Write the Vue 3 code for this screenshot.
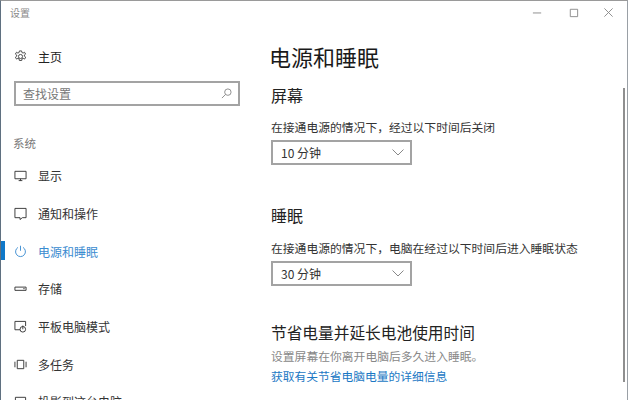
<script setup>
const items = [
  { label: '显示', icon: 'display' },
  { label: '通知和操作', icon: 'notify' },
  { label: '电源和睡眠', icon: 'power', active: true },
  { label: '存储', icon: 'storage' },
  { label: '平板电脑模式', icon: 'tablet' },
  { label: '多任务', icon: 'multi' },
  { label: '投影到这台电脑', icon: 'project' },
]
</script>

<template>
  <div class="window">
    <aside class="side">
      <div class="app-title">设置</div>
      <div class="home">
        <svg class="icon" viewBox="0 0 14 14" fill="none" stroke="#444" stroke-width="1">
          <circle cx="7" cy="7" r="2.2" />
          <path d="M5.8 1h2.4l.3 1.7 1.3.6 1.5-.9 1.2 2-1.4 1 .1 1.3 1.4 1-1.2 2.1-1.5-.8-1.3.6-.3 1.7H5.8l-.3-1.7-1.3-.6-1.5.8-1.2-2.1 1.4-1V5.4L1.5 4.4l1.2-2 1.5.9 1.3-.6z" />
        </svg>
        <span>主页</span>
      </div>
      <div class="search">
        <span>查找设置</span>
        <svg class="search-icon" viewBox="0 0 12 12" fill="none" stroke="#888" stroke-width="1">
          <circle cx="7.5" cy="4.5" r="3.5" />
          <path d="M5 7L1 11" />
        </svg>
      </div>
      <div class="group">系统</div>
      <nav class="nav">
        <div v-for="item in items" :key="item.label" class="row" :class="{ active: item.active }">
          <svg class="icon" viewBox="0 0 14 14" fill="none" stroke="currentColor" stroke-width="1">
            <template v-if="item.icon === 'display'">
              <path d="M1 2.5h12v8H1z" /><path d="M5 12.5h4M7 10.5v2" />
            </template>
            <template v-else-if="item.icon === 'notify'">
              <path d="M1 1.5h12v10H9L6.5 13.5v-2H1z" />
            </template>
            <template v-else-if="item.icon === 'power'">
              <path d="M4.3 2.6a5.3 5.3 0 1 0 5.4 0" /><path d="M7 .8v5.4" />
            </template>
            <template v-else-if="item.icon === 'storage'">
              <path d="M1 5.5h12v3.5H1z" /><path d="M10 7.2h1.5" />
            </template>
            <template v-else-if="item.icon === 'tablet'">
              <path d="M6.5 10.5H1V1.5h11.5v5" /><circle cx="9.5" cy="10" r="3" /><path d="M9.5 6v4" />
            </template>
            <template v-else-if="item.icon === 'multi'">
              <path d="M3.5 2.5h7v9h-7z" /><path d="M1 4v6M13 4v6" />
            </template>
            <template v-else>
              <path d="M1.5 2.5h11v8h-11z" />
            </template>
          </svg>
          <span>{{ item.label }}</span>
        </div>
      </nav>
    </aside>

    <main class="main">
      <div class="controls">
        <svg viewBox="0 0 12 12" class="ctl" stroke="#888" fill="none"><path d="M1 6.5h9" /></svg>
        <svg viewBox="0 0 12 12" class="ctl" stroke="#888" fill="none"><path d="M2.5 2.5h8v8h-8z" /></svg>
        <svg viewBox="0 0 12 12" class="ctl" stroke="#888" fill="none"><path d="M1.5 1.5l9 9M10.5 1.5l-9 9" /></svg>
      </div>
      <h1>电源和睡眠</h1>
      <h2>屏幕</h2>
      <p class="label">在接通电源的情况下&#xFF0C;经过以下时间后关闭</p>
      <div class="select">
        <span>10 分钟</span>
        <svg viewBox="0 0 12 7" class="chev" fill="none" stroke="#888"><path d="M.5 .5L6 6l5.5-5.5" /></svg>
      </div>
      <h2 class="sleep">睡眠</h2>
      <p class="label">在接通电源的情况下&#xFF0C;电脑在经过以下时间后进入睡眠状态</p>
      <div class="select">
        <span>30 分钟</span>
        <svg viewBox="0 0 12 7" class="chev" fill="none" stroke="#888"><path d="M.5 .5L6 6l5.5-5.5" /></svg>
      </div>
      <h3>节省电量并延长电池使用时间</h3>
      <p class="hint">设置屏幕在你离开电脑后多久进入睡眠。</p>
      <p class="link">获取有关节省电脑电量的详细信息</p>
    </main>
    <div class="scrollbar"></div>
  </div>
</template>

<style>
html, body { margin: 0; background: #fff; overflow: hidden; }
</style>

<style scoped>
.window {
  position: relative;
  width: 628px;
  height: 400px;
  box-sizing: border-box;
  overflow: hidden;
  display: flex;
  background: #fff;
  border-top: 1px solid #9a9a9a;
  border-left: 1px solid #5f7080;
  border-right: 1px solid #9aa0a6;
  font-family: "Noto Sans CJK SC", "Liberation Sans", sans-serif;
  color: #222;
}
.side { width: 270px; flex: none; font-size: 12px; }
.app-title { font-size: 10px; line-height: 12px; color: #8a8a8a; padding: 6px 0 0 9px; }
.home { display: flex; align-items: center; gap: 11px; padding: 29px 0 0 13px; height: 17px; }
.icon { width: 13px; height: 13px; flex: none; }
.search {
  box-sizing: border-box;
  display: flex;
  align-items: center;
  justify-content: space-between;
  margin: 16px 0 0 13px;
  width: 226px;
  height: 25px;
  border: 2px solid #a3a3a3;
  padding: 0 6px 0 7px;
  color: #777;
  font-size: 12px;
}
.search-icon { width: 11px; height: 11px; }
.group { margin-top: 29px; padding-left: 12px; line-height: 16px; font-size: 11.5px; color: #777; }
.nav { margin-top: 6px; }
.row {
  position: relative;
  display: flex;
  align-items: center;
  gap: 11px;
  height: 37.7px;
  padding-left: 13px;
  color: #333;
}
.row.active { color: #3a8bd0; }
.row.active::before {
  content: "";
  position: absolute;
  left: -1px;
  top: 9px;
  width: 5px;
  height: 19px;
  background: #0f78c8;
}
.main { flex: 1; min-width: 0; position: relative; }
.controls {
  position: absolute;
  top: 6px;
  right: 13px;
  display: flex;
  gap: 24.5px;
}
.ctl { width: 11px; height: 11px; }
.main h1 { margin: 0 0 0 -2px; padding-top: 40px; font-size: 22px; font-weight: 400; line-height: 30px; color: #1a1a1a; }
.main h2 { margin: 13px 0 0; font-size: 16px; font-weight: 400; line-height: 22px; color: #222; }
.main h2.sleep { margin-top: 39px; }
.label { margin: 13px 0 0; font-size: 11.8px; line-height: 16px; color: #333; white-space: nowrap; }
.main h2.sleep + .label { margin-top: 14px; }
.select {
  box-sizing: border-box;
  display: flex;
  align-items: center;
  justify-content: space-between;
  width: 141px;
  height: 25px;
  margin-top: 5px;
  padding: 0 5px 0 8px;
  border: 2px solid #a3a3a3;
  font-size: 12px;
  color: #333;
}
.chev { width: 12px; height: 7px; margin-right: 1px; }
.main h3 { margin: 36px 0 0; font-size: 15.7px; font-weight: 400; line-height: 22px; color: #222; }
.hint { margin: 4px 0 0; font-size: 11.8px; line-height: 16px; color: #888; white-space: nowrap; }
.link { margin: 4px 0 0; font-size: 11.75px; line-height: 16px; color: #1b78c4; white-space: nowrap; }
.scrollbar { position: absolute; right: 2px; top: 87px; width: 2px; height: 294px; background: #8f8f8f; }
</style>
